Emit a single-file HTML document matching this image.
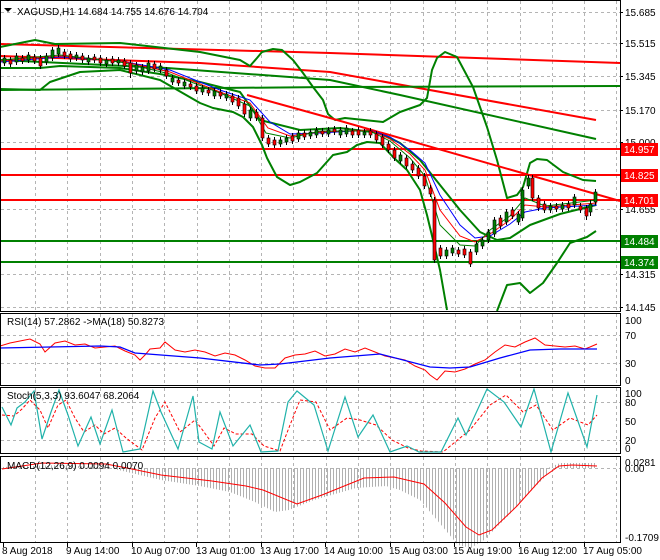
<!DOCTYPE html>
<html><head><meta charset="utf-8"><style>
html,body{margin:0;padding:0;background:#fff}
svg{display:block;font-family:"Liberation Sans",sans-serif;font-size:10px}
</style></head><body>
<svg width="660" height="560" viewBox="0 0 660 560" xmlns="http://www.w3.org/2000/svg">
<defs>
<pattern id="hs" width="3" height="10" patternUnits="userSpaceOnUse"><rect x="0" y="0" width="1" height="10" fill="#b0b0b0"/></pattern>
</defs>
<rect width="660" height="560" fill="#fff"/>
<!-- grid -->
<g stroke="#b4b4b4" stroke-dasharray="3,3" stroke-width="1" fill="none">
<path d="M35.5 1V311M67.5 1V311M100.5 1V311M132.5 1V311M164.5 1V311M197.5 1V311M229.5 1V311M261.5 1V311M293.5 1V311M326.5 1V311M358.5 1V311M390.5 1V311M423.5 1V311M455.5 1V311M487.5 1V311M520.5 1V311M552.5 1V311M584.5 1V311M616.5 1V311"/>
<path d="M35.5 314V385M67.5 314V385M100.5 314V385M132.5 314V385M164.5 314V385M197.5 314V385M229.5 314V385M261.5 314V385M293.5 314V385M326.5 314V385M358.5 314V385M390.5 314V385M423.5 314V385M455.5 314V385M487.5 314V385M520.5 314V385M552.5 314V385M584.5 314V385M616.5 314V385"/>
<path d="M35.5 388V453M67.5 388V453M100.5 388V453M132.5 388V453M164.5 388V453M197.5 388V453M229.5 388V453M261.5 388V453M293.5 388V453M326.5 388V453M358.5 388V453M390.5 388V453M423.5 388V453M455.5 388V453M487.5 388V453M520.5 388V453M552.5 388V453M584.5 388V453M616.5 388V453"/>
<path d="M35.5 457V542M67.5 457V542M100.5 457V542M132.5 457V542M164.5 457V542M197.5 457V542M229.5 457V542M261.5 457V542M293.5 457V542M326.5 457V542M358.5 457V542M390.5 457V542M423.5 457V542M455.5 457V542M487.5 457V542M520.5 457V542M552.5 457V542M584.5 457V542M616.5 457V542"/>
<path d="M1 12.5H620M1 43.5H620M1 76.5H620M1 110.5H620M1 142.5H620M1 175.5H620M1 209.5H620M1 241.5H620M1 274.5H620M1 307.5H620M1 335.5H620M1 363.5H620M1 402.5H620M1 440.5H620M1 468.5H620"/>
</g>
<path d="M620 12.5h3M620 43.5h3M620 76.5h3M620 110.5h3M620 142.5h3M620 175.5h3M620 209.5h3M620 241.5h3M620 274.5h3M620 307.5h3M3.5 543v4M67.5 543v4M132.5 543v4M196.5 543v4M261.5 543v4M325.5 543v4M390.5 543v4M454.5 543v4M519.5 543v4M584.5 543v4" stroke="#000"/>
<!-- levels -->
<g stroke-width="2" fill="none" stroke-linejoin="round">
<path d="M0 149H620M0 175H620M0 200H620" stroke="#f00"/>
<path d="M0 241H620M0 262H620" stroke="#008000"/>
<polyline points="0,44 330,53 620,63" stroke="#f00"/>
<polyline points="0,56 200,63 330,72 596,120" stroke="#f00"/>
<polyline points="0,90 330,87 620,86" stroke="#008000"/>
<polyline points="0,60 167,68 330,80 400,95 596,139" stroke="#008000"/>
<polyline points="0,47 35,40 55,44 120,43 200,52 240,60 250,66 257,58 262,52 273,49 282,50 293,60 303,73 313,87 323,100 328,114 335,120 345,118 383,122 400,112 420,105 427,98 432,70 437,58 445,52 457,57 473,87 487,127 497,160 507,198 517,195 523,187 530,163 537,159 547,160 563,172 583,180 596,181" stroke="#008000"/>
<polyline points="0,89 40,90 50,82 80,72 120,70 160,80 200,103 213,108 233,112 243,117 253,127 262,145 267,158 277,177 290,185 300,182 317,173 333,155 347,152 357,145 367,142 380,143 393,157 407,170 420,190 427,215 433,240 440,270 447,310" stroke="#008000"/>
<polyline points="497,311 507,285 520,283 530,293 543,283 557,263 570,243 587,237 596,231" stroke="#008000"/>
<polyline points="0,68 40,68 60,66 120,68 160,74 200,82 240,92 260,120 300,130 340,128 380,133 400,143 420,160 440,185 460,210 480,232 497,240 510,238 530,225 560,214 596,205" stroke="#008000"/>
<polyline points="247,95 330,118 620,201" stroke="#f00"/>
</g>
<!-- MAs -->
<g fill="none" stroke-width="1">
<polyline stroke="#00f" points="0,62 60,57 120,61 170,70 220,90 250,100 270,122 290,134 320,133 370,130 390,137 410,150 425,163 440,195 460,225 475,238 490,236 510,224 525,212 545,208 597,205"/>
<polyline stroke="#f00" points="0,61 60,56 120,61 170,72 220,92 250,103 268,128 290,136 320,132 370,130 390,139 410,154 425,170 440,210 460,236 475,242 490,234 510,220 525,205 545,207 597,203"/>
<polyline stroke="#008000" points="0,60 60,55 120,62 170,74 220,93 250,106 266,133 290,138 320,131 370,131 390,141 410,158 425,176 440,225 460,245 475,246 490,230 510,216 525,198 545,206 597,200"/>
</g>
<!-- candles -->
<path stroke="#000" stroke-width="1" fill="none" d="M4.5 55v11M10.5 57v10M16.5 53v12M22.5 55v9M28.5 52v11M34.5 54v10M40.5 55v14M46.5 53v12M52.5 47v14M58.5 45v12M64.5 49v10M70.5 51v11M76.5 52v9M82.5 53v10M88.5 55v10M94.5 54v9M100.5 55v11M106.5 57v10M112.5 56v10M118.5 57v9M124.5 58v11M130.5 60v18M136.5 62v12M142.5 64v11M148.5 60v14M154.5 61v11M160.5 63v10M166.5 67v12M172.5 75v10M178.5 77v9M184.5 79v10M190.5 81v9M196.5 83v11M202.5 85v10M208.5 87v9M214.5 88v11M220.5 89v10M226.5 91v10M232.5 93v12M238.5 95v14M244.5 101v16M250.5 107v14M256.5 109v12M262.5 115v26M268.5 135v12M274.5 137v11M280.5 137v10M286.5 135v10M292.5 133v11M298.5 130v12M304.5 130v10M310.5 129v10M316.5 127v11M322.5 128v9M328.5 127v10M334.5 126v9M340.5 127v11M346.5 125v12M352.5 128v10M358.5 127v11M364.5 129v9M370.5 128v10M376.5 131v12M382.5 134v14M388.5 141v12M394.5 147v14M400.5 152v12M406.5 155v14M412.5 161v12M418.5 165v14M424.5 173v16M430.5 185v12M434.5 197v66M440.5 245v14M446.5 247v12M452.5 245v11M458.5 247v10M464.5 246v12M470.5 249v18M476.5 241v14M482.5 237v12M488.5 229v14M494.5 217v20M500.5 215v14M506.5 209v16M512.5 207v12M518.5 211v14M522.5 187v34M528.5 175v14M532.5 175v26M538.5 195v16M544.5 201v12M550.5 203v10M556.5 203v9M562.5 202v10M568.5 201v10M574.5 194v14M580.5 203v10M586.5 205v15M590.5 200v16M595.5 189v16"/>
<g stroke="#000" stroke-width="0.6">
<g fill="#008000">
<rect x="3" y="58" width="3" height="5"/><rect x="15" y="56" width="3" height="6"/><rect x="27" y="55" width="3" height="5"/><rect x="45" y="56" width="3" height="6"/><rect x="51" y="50" width="3" height="8"/><rect x="57" y="48" width="3" height="6"/><rect x="75" y="55" width="3" height="3"/><rect x="87" y="58" width="3" height="4"/><rect x="105" y="60" width="3" height="4"/><rect x="117" y="60" width="3" height="3"/><rect x="135" y="65" width="3" height="6"/><rect x="141" y="67" width="3" height="5"/><rect x="147" y="63" width="3" height="8"/><rect x="159" y="66" width="3" height="4"/><rect x="171" y="78" width="3" height="4"/><rect x="183" y="82" width="3" height="4"/><rect x="201" y="88" width="3" height="4"/><rect x="213" y="91" width="3" height="5"/><rect x="225" y="94" width="3" height="4"/><rect x="249" y="110" width="3" height="8"/><rect x="279" y="140" width="3" height="4"/><rect x="285" y="138" width="3" height="4"/><rect x="297" y="133" width="3" height="6"/><rect x="309" y="132" width="3" height="4"/><rect x="315" y="130" width="3" height="5"/><rect x="327" y="130" width="3" height="4"/><rect x="339" y="130" width="3" height="5"/><rect x="345" y="128" width="3" height="6"/><rect x="363" y="132" width="3" height="3"/><rect x="399" y="155" width="3" height="6"/><rect x="445" y="250" width="3" height="6"/><rect x="451" y="248" width="3" height="5"/><rect x="475" y="244" width="3" height="8"/><rect x="481" y="240" width="3" height="6"/><rect x="487" y="232" width="3" height="8"/><rect x="493" y="220" width="3" height="14"/><rect x="505" y="212" width="3" height="10"/><rect x="517" y="214" width="3" height="8"/><rect x="521" y="190" width="3" height="28"/><rect x="527" y="178" width="3" height="8"/><rect x="549" y="206" width="3" height="4"/><rect x="561" y="205" width="3" height="4"/><rect x="573" y="197" width="3" height="8"/><rect x="589" y="204" width="3" height="8"/><rect x="594" y="192" width="3" height="10"/>
</g>
<g fill="#f00">
<rect x="9" y="60" width="3" height="4"/><rect x="21" y="58" width="3" height="3"/><rect x="33" y="57" width="3" height="4"/><rect x="39" y="58" width="3" height="8"/><rect x="63" y="52" width="3" height="4"/><rect x="69" y="54" width="3" height="5"/><rect x="81" y="56" width="3" height="4"/><rect x="93" y="57" width="3" height="3"/><rect x="99" y="58" width="3" height="5"/><rect x="111" y="59" width="3" height="4"/><rect x="123" y="61" width="3" height="5"/><rect x="129" y="63" width="3" height="10"/><rect x="153" y="64" width="3" height="5"/><rect x="165" y="70" width="3" height="6"/><rect x="177" y="80" width="3" height="3"/><rect x="189" y="84" width="3" height="3"/><rect x="195" y="86" width="3" height="5"/><rect x="207" y="90" width="3" height="3"/><rect x="219" y="92" width="3" height="4"/><rect x="231" y="96" width="3" height="6"/><rect x="237" y="98" width="3" height="8"/><rect x="243" y="104" width="3" height="10"/><rect x="255" y="112" width="3" height="6"/><rect x="261" y="118" width="3" height="20"/><rect x="267" y="138" width="3" height="6"/><rect x="273" y="140" width="3" height="5"/><rect x="291" y="136" width="3" height="5"/><rect x="303" y="133" width="3" height="4"/><rect x="321" y="131" width="3" height="3"/><rect x="333" y="129" width="3" height="3"/><rect x="351" y="131" width="3" height="4"/><rect x="357" y="130" width="3" height="5"/><rect x="369" y="131" width="3" height="4"/><rect x="375" y="134" width="3" height="6"/><rect x="381" y="137" width="3" height="8"/><rect x="387" y="144" width="3" height="6"/><rect x="393" y="150" width="3" height="8"/><rect x="405" y="158" width="3" height="8"/><rect x="411" y="164" width="3" height="6"/><rect x="417" y="168" width="3" height="8"/><rect x="423" y="176" width="3" height="10"/><rect x="429" y="188" width="3" height="6"/><rect x="433" y="200" width="3" height="60"/><rect x="439" y="248" width="3" height="8"/><rect x="457" y="250" width="3" height="4"/><rect x="463" y="249" width="3" height="6"/><rect x="469" y="252" width="3" height="12"/><rect x="499" y="218" width="3" height="8"/><rect x="511" y="210" width="3" height="6"/><rect x="531" y="178" width="3" height="20"/><rect x="537" y="198" width="3" height="10"/><rect x="543" y="204" width="3" height="6"/><rect x="555" y="206" width="3" height="3"/><rect x="567" y="204" width="3" height="4"/><rect x="579" y="206" width="3" height="4"/><rect x="585" y="208" width="3" height="8"/>
</g>
</g>
<!-- RSI -->
<polyline fill="none" stroke="#f00" stroke-width="1" points="0,346 10,343 20,341 30,339 40,344 45,352 55,343 65,341 75,345 85,344 95,348 105,347 115,346 125,351 135,355 140,360 145,355 150,349 160,348 165,342 175,350 185,352 195,350 205,352 215,356 225,353 235,355 245,360 255,366 265,368 275,368 285,358 295,355 305,354 315,351 325,356 335,354 345,349 355,352 365,348 375,352 385,356 395,358 405,360 415,366 425,370 430,375 437,380 445,371 455,372 465,369 475,364 485,360 495,352 505,345 515,347 525,342 535,338 545,345 555,346 565,347 575,346 585,349 590,347 597,344"/>
<polyline fill="none" stroke="#00f" stroke-width="1.3" points="0,348 100,346 120,347 135,353 200,358 260,365 280,364 330,358 380,354 430,367 450,368 470,367 500,358 530,350 560,349 597,349"/>
<!-- Stoch -->
<polyline fill="none" stroke="#f00" stroke-width="1" stroke-dasharray="3,2" points="2,415 14,416 22,409 30,400 40,410 48,428 58,405 66,400 75,418 84,432 95,425 104,434 115,428 126,438 142,450 155,418 165,402 180,432 195,420 204,432 214,446 224,428 236,434 252,434 264,446 280,451 290,425 300,400 316,402 330,430 347,418 360,420 376,425 392,440 408,448 421,451 443,452 460,438 470,430 490,405 506,395 523,412 536,405 553,430 570,418 588,425 597,415"/>
<polyline fill="none" stroke="#20b2aa" stroke-width="1.2" points="2,407 11,425 17,408 25,402 34,391 42,439 51,412 59,390 68,415 78,446 91,417 100,444 112,410 123,452 140,449 153,391 161,412 178,449 193,396 199,442 212,449 220,412 233,446 250,425 261,452 278,451 288,402 297,391 314,405 328,451 345,397 358,437 373,415 390,452 407,446 419,452 441,452 458,418 466,435 487,389 504,402 521,427 534,389 551,452 568,393 587,447 597,395"/>
<!-- MACD -->
<polygon fill="url(#hs)" points="2,468 2,467 60,465 110,468 127,472 161,480 200,486 230,492 255,502 275,512 289,510 314,500 356,488 386,486 400,490 420,500 437,520 458,545 471,548 484,540 509,515 534,488 548,474 548,468 560,463 597,463 597,468"/>
<polyline fill="none" stroke="#f00" stroke-width="1" points="2,469 42,463 106,464 127,468 161,475 212,481 246,486 263,490 297,504 322,495 364,478 394,477 424,484 445,503 466,527 479,535 492,530 517,506 542,478 559,466 572,465 597,466"/>
<!-- pane borders -->
<g fill="none" stroke="#000" stroke-width="1">
<rect x="0.5" y="0.5" width="620" height="311"/>
<rect x="0.5" y="313.5" width="620" height="72"/>
<rect x="0.5" y="387.5" width="620" height="66"/>
<rect x="0.5" y="456.5" width="620" height="86"/>
</g>
<polygon points="4,8 12,8 8,12" fill="#000"/>
<text x="17" y="15" fill="#000">XAGUSD,H1  14.684 14.755 14.676 14.704</text>
<text x="7" y="325" fill="#000">RSI(14) 57.2862  -&gt;MA(18) 50.8273</text>
<text x="7" y="399" fill="#000">Stoch(5,3,3) 93.6047 68.2064</text>
<text x="7" y="469" fill="#000">MACD(12,26,9) 0.0094 0.0070</text>
<g fill="#000">
<text x="625" y="16">15.685</text>
<text x="625" y="47">15.515</text>
<text x="625" y="80">15.345</text>
<text x="625" y="114">15.170</text>
<text x="625" y="146">15.000</text>
<text x="625" y="213">14.655</text>
<text x="625" y="278">14.315</text>
<text x="625" y="311">14.145</text>
<text x="625" y="324">100</text>
<text x="625" y="339">70</text>
<text x="625" y="367">30</text>
<text x="625" y="384">0</text>
<text x="625" y="397">100</text>
<text x="625" y="406">80</text>
<text x="625" y="425">50</text>
<text x="625" y="444">20</text>
<text x="625" y="452">0</text>
<text x="625" y="466">0.0281</text>
<text x="625" y="472">0.00</text>
<text x="625" y="541">-0.1709</text>
</g>
<g>
<rect x="621" y="143" width="37" height="13" fill="#f00"/><text x="624" y="153" fill="#fff">14.957</text>
<rect x="621" y="169" width="37" height="13" fill="#f00"/><text x="624" y="179" fill="#fff">14.825</text>
<rect x="621" y="194" width="37" height="13" fill="#f00"/><text x="624" y="204" fill="#fff">14.701</text>
<rect x="621" y="235" width="37" height="13" fill="#008000"/><text x="624" y="245" fill="#fff">14.484</text>
<rect x="621" y="256" width="37" height="13" fill="#008000"/><text x="624" y="266" fill="#fff">14.374</text>
</g>
<g fill="#000">
<text x="2" y="554">8 Aug 2018</text>
<text x="66" y="554">9 Aug 14:00</text>
<text x="131" y="554">10 Aug 07:00</text>
<text x="196" y="554">13 Aug 01:00</text>
<text x="260" y="554">13 Aug 17:00</text>
<text x="324" y="554">14 Aug 10:00</text>
<text x="389" y="554">15 Aug 03:00</text>
<text x="453" y="554">15 Aug 19:00</text>
<text x="518" y="554">16 Aug 12:00</text>
<text x="583" y="554">17 Aug 05:00</text>
</g>
</svg>
</body></html>
